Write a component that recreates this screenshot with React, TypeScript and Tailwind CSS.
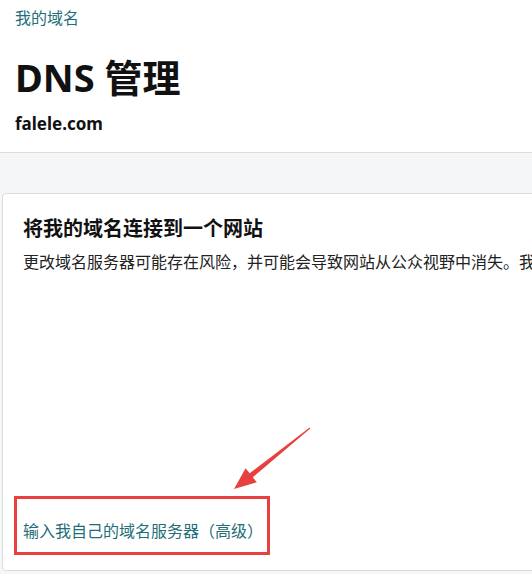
import React from "react"

const font = { fontFamily: '"Noto Sans", "Noto Sans CJK SC", sans-serif' }

export default function App() {
  return (
    <div className="relative w-[532px] h-[574px] overflow-hidden bg-[#f5f6f7]" style={font}>
      {/* header */}
      <div className="bg-white border-b border-[#dadcde] h-[153px] px-[15px] pt-[8px]">
        <div className="text-[16px] leading-[20px] text-[#1f6e78]">我的域名</div>
        <h1 className="mt-[25px] text-[38px] leading-[48px] font-bold text-[#111]">DNS 管理</h1>
        <div className="mt-[11px] text-[17px] leading-[24px] font-bold text-[#111]">falele.com</div>
      </div>

      {/* card */}
      <div className="pt-[40px] pl-[2px]">
        <div className="w-[640px] h-[378px] bg-white border border-[#dcdcdc] rounded-[4px] px-[20px] pt-[21px] pb-[27px] flex flex-col">
          <h2 className="text-[20px] leading-[28px] font-bold text-[#111]">将我的域名连接到一个网站</h2>
          <p className="mt-[7px] text-[16px] leading-[24px] text-[#222] whitespace-nowrap">
            更改域名服务器可能存在风险，并可能会导致网站从公众视野中消失。我们建议您先进行备份。
          </p>
          <a className="mt-auto text-[16px] leading-[24px] text-[#1f6e78]">输入我自己的域名服务器（高级）</a>
        </div>
      </div>

      {/* annotation */}
      <div className="absolute left-[14px] top-[496px] w-[256px] h-[59px] border-[3px] border-[#e8403f]" />
      <svg className="absolute left-0 top-0" width="532" height="574">
        <polygon
          fill="#e8403f"
          points="309.7,427.6 249.6,473.3 245.6,468.2 234,489 256.8,482.2 252.8,477.2 310.3,428.4"
        />
      </svg>
    </div>
  )
}
